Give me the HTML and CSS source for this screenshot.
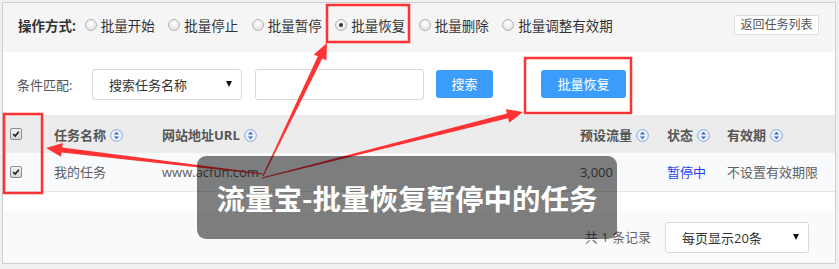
FILE: index.html
```html
<!DOCTYPE html>
<html lang="zh-CN">
<head>
    <meta charset="UTF-8">
    <meta name="viewport" content="width=device-width, initial-scale=1">
    <title>流量宝-批量恢复</title>
    <link rel="stylesheet" href="styles.css">
</head>
<body>
<div class="panel">
    <div class="toolbar">
        <span class="toolbar-label">操作方式:</span>
        <label class="radio"><i class="radio-dot"></i>批量开始</label>
        <label class="radio"><i class="radio-dot"></i>批量停止</label>
        <label class="radio"><i class="radio-dot"></i>批量暂停</label>
        <label class="radio"><i class="radio-dot radio-dot-on"></i>批量恢复</label>
        <label class="radio"><i class="radio-dot"></i>批量删除</label>
        <label class="radio"><i class="radio-dot"></i>批量调整有效期</label>
        <a class="btn-back">返回任务列表</a>
    </div>
    <div class="searchbar">
        <span class="searchbar-label">条件匹配:</span>
        <div class="select select-field"><span>搜索任务名称</span><i class="caret"></i></div>
        <div class="input"></div>
        <a class="btn btn-search">搜索</a>
        <a class="btn btn-resume">批量恢复</a>
    </div>
    <table class="list">
        <colgroup>
            <col style="width:39px">
            <col style="width:108px">
            <col style="width:418px">
            <col style="width:87px">
            <col style="width:60px">
            <col>
        </colgroup>
        <thead>
        <tr>
            <th class="list-check"><i class="checkbox"><svg viewBox="0 0 12 12"><path d="M2.6 6.2 L5 8.4 L9.4 3.2"/></svg></i></th>
            <th>任务名称<svg class="sort" viewBox="0 0 13 13"><circle cx="6.5" cy="6.5" r="5.9"/><path d="M6.5 2.8 L9.1 5.6 L3.9 5.6 Z M3.9 7.4 L9.1 7.4 L6.5 10.2 Z"/></svg></th>
            <th>网站地址URL<svg class="sort" viewBox="0 0 13 13"><circle cx="6.5" cy="6.5" r="5.9"/><path d="M6.5 2.8 L9.1 5.6 L3.9 5.6 Z M3.9 7.4 L9.1 7.4 L6.5 10.2 Z"/></svg></th>
            <th>预设流量<svg class="sort" viewBox="0 0 13 13"><circle cx="6.5" cy="6.5" r="5.9"/><path d="M6.5 2.8 L9.1 5.6 L3.9 5.6 Z M3.9 7.4 L9.1 7.4 L6.5 10.2 Z"/></svg></th>
            <th>状态<svg class="sort" viewBox="0 0 13 13"><circle cx="6.5" cy="6.5" r="5.9"/><path d="M6.5 2.8 L9.1 5.6 L3.9 5.6 Z M3.9 7.4 L9.1 7.4 L6.5 10.2 Z"/></svg></th>
            <th>有效期<svg class="sort" viewBox="0 0 13 13"><circle cx="6.5" cy="6.5" r="5.9"/><path d="M6.5 2.8 L9.1 5.6 L3.9 5.6 Z M3.9 7.4 L9.1 7.4 L6.5 10.2 Z"/></svg></th>
        </tr>
        </thead>
        <tbody>
        <tr>
            <td class="list-check"><i class="checkbox"><svg viewBox="0 0 12 12"><path d="M2.6 6.2 L5 8.4 L9.4 3.2"/></svg></i></td>
            <td>我的任务</td>
            <td>www.acfun.com</td>
            <td class="list-num">3,000</td>
            <td class="list-status">暂停中</td>
            <td>不设置有效期限</td>
        </tr>
        </tbody>
    </table>
    <div class="list-spacer"></div>
    <div class="pager">
        <span class="pager-total">共 1 条记录</span>
        <div class="select select-size"><span>每页显示20条</span><i class="caret"></i></div>
    </div>
</div>

<!-- 标注 -->
<svg class="marks" viewBox="0 0 839 269">
    <rect x="327" y="5" width="82" height="37"/>
    <rect x="525" y="58" width="106" height="55"/>
    <rect x="4" y="114" width="38" height="79"/>
    <polygon points="263.45,176.22 322.31,58.50 326.37,60.46 327,43 313.75,54.38 317.81,56.34 262.55,175.78"/>
    <polygon points="262.12,178.48 508.10,118.34 509.21,122.71 523,112 505.77,109.13 506.88,113.50 261.88,177.52"/>
    <polygon points="263.06,173.50 62.19,147.42 62.72,142.95 46,148 61.06,156.85 61.59,152.38 262.94,174.50"/>
</svg>
<div class="caption">流量宝-批量恢复暂停中的任务</div>
</body>
</html>
```

FILE: styles.css
```css
*{
    margin: 0;
    padding: 0;
    box-sizing: border-box;
}
body{
    background: #eef0f2;
    font-family: "Open Sans", "Noto Sans CJK SC", sans-serif;
    font-size: 13px;
    color: #333;
}

.panel{
    position: relative;
    margin: 2px 0 0 2px;
    width: 834px;
    height: 262px;
    border: 1px solid #cfcfcf;
    background: #fff;
}

/* 操作方式 */
.toolbar{
    display: flex;
    align-items: center;
    height: 49px;
    padding: 0 16px 6px 15px;
    background: #f5f5f5;
}
.toolbar-label{
    font-size: 13.5px;
    font-weight: bold;
    color: #333;
    margin-right: 9px;
}
.radio{
    display: flex;
    align-items: center;
    margin-right: 13.5px;
    font-size: 13.5px;
    color: #333;
}
.radio-dot{
    width: 12px;
    height: 12px;
    margin-right: 4px;
    border: 1px solid #b4b4b4;
    border-radius: 50%;
    background: radial-gradient(circle at 50% 35%, #fff 0, #e6e6e6 70%, #d4d4d4 100%);
    position: relative;
}
.radio-dot-on:after{
    content: "";
    position: absolute;
    left: 3px;
    top: 3px;
    width: 4px;
    height: 4px;
    border-radius: 50%;
    background: #333;
}
.btn-back{
    margin-left: auto;
    width: 85px;
    height: 20px;
    line-height: 18px;
    text-align: center;
    font-size: 12px;
    color: #555;
    background: #fff;
    border: 1px solid #ddd;
    border-radius: 2px;
}

/* 条件匹配 */
.searchbar{
    display: flex;
    align-items: center;
    height: 63px;
    padding: 1px 0 0 14px;
}
.searchbar-label{
    width: 75px;
    color: #555;
}
.select{
    display: flex;
    align-items: center;
    justify-content: space-between;
    height: 31px;
    padding: 0 9px 0 16px;
    border: 1px solid #d9d9d9;
    border-radius: 3px;
    background: #fff;
    color: #333;
}
.select-field{
    width: 150px;
}
.caret{
    width: 0;
    height: 0;
    border-left: 3px solid transparent;
    border-right: 3px solid transparent;
    border-top: 6px solid #111;
}
.input{
    width: 169px;
    height: 31px;
    margin-left: 13px;
    border: 1px solid #d9d9d9;
    border-radius: 3px;
}
.btn{
    height: 28px;
    line-height: 28px;
    text-align: center;
    color: #fff;
    background: #3c9cfb;
    border-radius: 3px;
}
.btn-search{
    width: 57px;
    margin-left: 12px;
}
.btn-resume{
    width: 85px;
    margin-left: 48px;
}

/* 列表 */
.list{
    width: 100%;
    table-layout: fixed;
    border-collapse: collapse;
}
.list th{
    height: 38px;
    padding-left: 12px;
    text-align: left;
    font-weight: bold;
    color: #555;
    background: #ececec;
    white-space: nowrap;
}
.list td{
    height: 38px;
    padding-left: 12px;
    color: #5f5f5f;
    background: #f9fafc;
    border-bottom: 1px solid #e6e6e6;
    white-space: nowrap;
}
.list .list-check{
    padding-left: 7px;
}
.list .list-num{
    padding: 0 42px 0 0;
    text-align: right;
}
.list .list-status{
    color: #1f3ff2;
}
.checkbox{
    display: block;
    width: 12px;
    height: 12px;
    border: 1px solid #8e8e8e;
    border-radius: 2px;
    background: linear-gradient(#f2f2f2, #d6d6d6);
}
.checkbox svg{
    display: block;
    width: 10px;
    height: 10px;
    fill: none;
    stroke: #222;
    stroke-width: 2;
}
.sort{
    width: 13px;
    height: 13px;
    margin-left: 4px;
    vertical-align: -2px;
}
.sort circle{
    fill: #eaf0fa;
    stroke: #8aa9dc;
    stroke-width: 1;
}
.sort path{
    fill: #3a6cc4;
}
.list-spacer{
    height: 19px;
}

/* 分页 */
.pager{
    display: flex;
    align-items: flex-start;
    justify-content: flex-end;
    height: 52px;
    padding: 11px 26px 0 0;
    background: #fafafa;
}
.pager-total{
    line-height: 31px;
    margin-right: 14px;
    color: #666;
}
.select-size{
    width: 144px;
}

/* 标注 */
.marks{
    position: absolute;
    left: 0;
    top: 0;
    width: 839px;
    height: 269px;
    pointer-events: none;
}
.marks rect{
    fill: none;
    stroke: #f33;
    stroke-width: 2.5;
}
.marks polygon{
    fill: #f33;
}
.caption{
    position: absolute;
    left: 197px;
    top: 156px;
    width: 420px;
    height: 83px;
    line-height: 83px;
    padding-bottom: 3px;
    text-align: center;
    border-radius: 9px;
    background: rgba(0, 0, 0, 0.5);
    color: #fff;
    font-family: "Noto Sans CJK SC", sans-serif;
    font-size: 28.5px;
    font-weight: bold;
}
```
